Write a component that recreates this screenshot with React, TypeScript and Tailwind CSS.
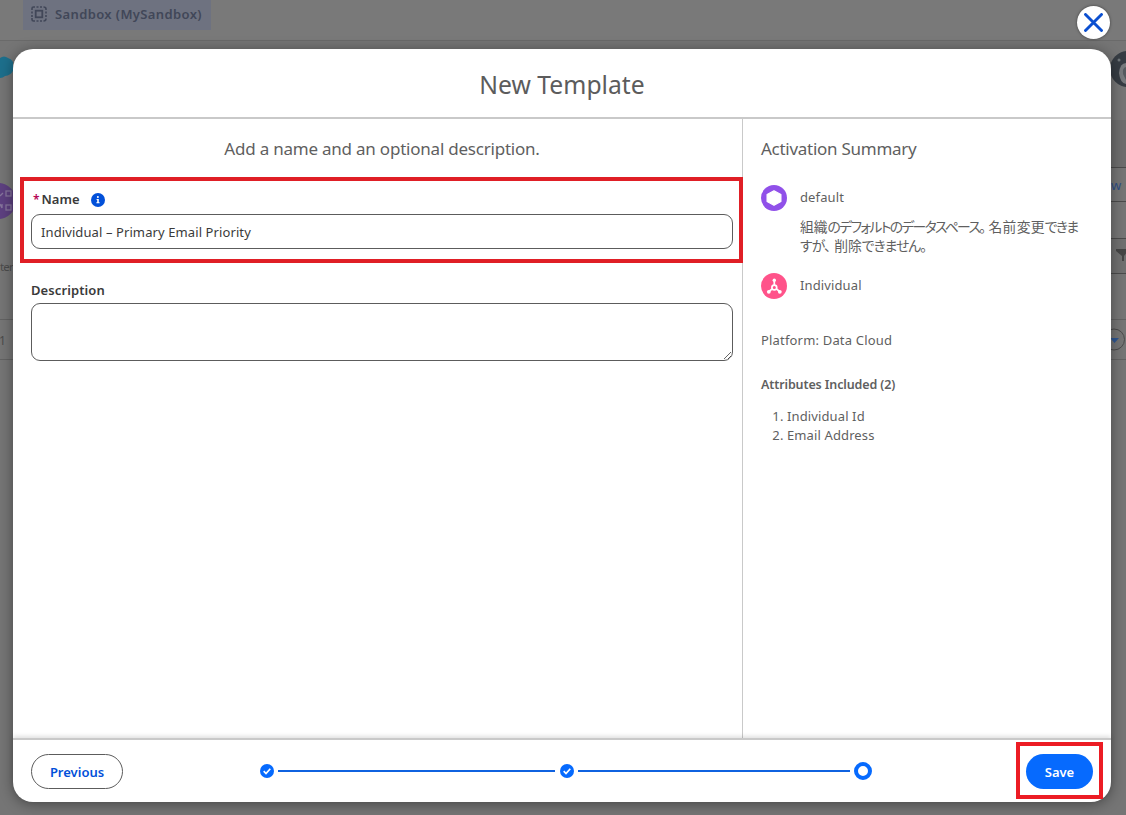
import type { ReactNode } from 'react';

interface SummaryItemProps {
  icon: ReactNode;
  title: string;
  children?: ReactNode;
}

function SandboxIcon() {
  return (
    <svg width="16" height="16" viewBox="0 0 16 16" fill="none" stroke="#414758" strokeWidth="1.6">
      <path d="M1 4V2.5Q1 1 2.5 1H4M5.5 1h2M9 1h2M12.5 1Q15 1 15 3v1M15 5.5v2M15 9v2M15 12.5Q15 15 12.5 15M11 15H9M7.5 15H5.5M4 15H2.5Q1 15 1 13.5V12M1 11V9M1 7.5V5.5" />
      <rect x="4.7" y="4.7" width="6.6" height="6.6" strokeWidth="1.8" />
    </svg>
  );
}

function CloseIcon() {
  return (
    <svg width="19" height="19" viewBox="0 0 19 19" stroke="#0b4fd0" strokeWidth="2.9" strokeLinecap="round">
      <path d="M1.5 1.5l16 16M17.5 1.5l-16 16" />
    </svg>
  );
}

function InfoIcon() {
  return (
    <svg width="14" height="14" viewBox="0 0 14 14">
      <circle cx="7" cy="7" r="7" fill="#0250d9" />
      <circle cx="6.9" cy="4" r="1" fill="#fff" />
      <path d="M5.6 5.9h2.2v3.3h.8v1.1H5.4V9.2h.8V7h-.6z" fill="#fff" />
    </svg>
  );
}

function DataSpaceIcon() {
  return (
    <svg width="26" height="26" viewBox="0 0 26 26">
      <circle cx="13" cy="13" r="13" fill="#9050e9" />
      <path
        d="M13 5.8l6.9 3.7v7L13 20.3l-6.9-3.8v-7z"
        fill="#fff"
        stroke="#fff"
        strokeWidth="1.2"
        strokeLinejoin="round"
      />
    </svg>
  );
}

function IndividualIcon() {
  return (
    <svg width="26" height="26" viewBox="0 0 26 26">
      <circle cx="13" cy="13" r="13" fill="#ff538a" />
      <g fill="none" stroke="#fff" strokeWidth="1.7">
        <circle cx="13.3" cy="14.5" r="2.4" />
        <path d="M13.3 12V7.5M11.2 15.8L8 18.5M15.4 15.8L18.6 18.5" />
      </g>
      <circle cx="13.3" cy="7.3" r="1.7" fill="#fff" />
      <circle cx="7.8" cy="18.8" r="1.9" fill="#fff" />
      <circle cx="18.8" cy="18.8" r="1.9" fill="#fff" />
    </svg>
  );
}

function StepDone() {
  return (
    <svg width="14" height="14" viewBox="0 0 14 14" className="shrink-0">
      <circle cx="7" cy="7" r="7" fill="#066afe" />
      <path d="M3.7 7.2l2.3 2.3 4.3-4.8" fill="none" stroke="#fff" strokeWidth="1.7" />
    </svg>
  );
}

function SummaryItem({ icon, title, children }: SummaryItemProps) {
  return (
    <div className="flex gap-[13px]">
      <span className="h-[26px] shrink-0">{icon}</span>
      <div className="min-w-0 flex-1">
        <p className="h-[26px] text-[13px] leading-6 tracking-[0.12px]">{title}</p>
        {children}
      </div>
    </div>
  );
}

// Page behind the dialog, only its edges stay visible
function PageBehind() {
  return (
    <div className="flex h-full flex-col bg-[#757575]">
      <div className="flex h-[41px] shrink-0 items-start border-b border-[#6a6a6a] bg-[#797979] pl-[23px]">
        <div className="flex h-[30px] w-[188px] items-center bg-[#6e7280] pb-[2px] pl-2 text-[13px] font-semibold text-[#414758]">
          <SandboxIcon />
          <span className="ml-2 whitespace-nowrap pt-[2px] tracking-[0.38px]">Sandbox (MySandbox)</span>
        </div>
      </div>
      <div className="flex flex-1 justify-between">
        <div className="flex w-[13px] flex-col overflow-hidden">
          <svg width="13" height="142" viewBox="0 0 13 142" className="shrink-0">
            <path d="M0 17Q4 14 8 17Q14 19 14 26Q13 34 5 35Q3 37 0 37z" fill="#1d6f8c" />
          </svg>
          <svg width="13" height="37" viewBox="0 0 13 37" className="shrink-0">
            <circle cx="-2" cy="18" r="18" fill="#5d4080" />
            <g fill="none" stroke="#86759c" strokeWidth="1.3">
              <rect x="6" y="8" width="5" height="5" />
              <rect x="6" y="22" width="5" height="5" />
              <path d="M0 13l3-3M0 21l2 4v-4" />
            </g>
          </svg>
          <div className="mt-[37px] h-[62px] shrink-0 text-[11.5px] leading-5 tracking-[-0.8px] text-[#4b4b4b]">ter</div>
          <div className="flex h-[41px] shrink-0 items-center border-y border-[#626262] pt-[2px] text-[12px] text-[#4b4b4b]">
            <span className="-ml-px">1</span>
          </div>
        </div>
        <div className="flex w-[15px] flex-col overflow-hidden">
          <svg width="15" height="79" viewBox="0 0 15 79" className="shrink-0">
            <circle cx="17" cy="28" r="18" fill="#363c43" />
            <path d="M15 22Q9 22 8 32Q9 42 15 43z" fill="#777a7d" />
            <path d="M15 26Q11 27 12 33L15 39z" fill="#565b60" />
            <circle cx="8" cy="19" r="1.5" fill="#6e7478" />
          </svg>
          <div className="h-[47px] shrink-0 bg-[#6d6d6d]" />
          <div className="flex h-[35px] shrink-0 items-center border-y border-[#4b4b4b] pt-[2px] text-[13px] text-[#2f4f86]">
            w
          </div>
          <div className="h-[36px] shrink-0" />
          <div className="flex h-[36px] shrink-0 items-center border-y border-[#4b4b4b] bg-[#707070] pl-[5px]">
            <svg width="10" height="14" viewBox="0 0 10 14" fill="#454545" className="shrink-0">
              <path d="M0 0h12v2L8 7v5H6V7L0 2z" />
            </svg>
          </div>
          <div className="h-[45px] shrink-0" />
          <div className="flex h-[41px] shrink-0 items-center border-y border-[#626262]">
            <svg width="15" height="24" viewBox="0 0 15 24" className="shrink-0">
              <circle cx="3" cy="11.5" r="10.5" fill="none" stroke="#4b4b4b" />
              <path d="M-1 10h9l-4.5 5z" fill="#2f5791" />
            </svg>
          </div>
        </div>
      </div>
    </div>
  );
}

function ActivationSummary() {
  return (
    <aside className="flex-1 border-l border-[#c9c9c9] pl-[18px] pr-5 pt-[17px] text-[13px] text-[#5f5f5f]">
      <h2 className="text-[17px] leading-[26px] tracking-[-0.27px]">Activation Summary</h2>
      <div className="mt-[23px] flex flex-col gap-[18px]">
        <SummaryItem icon={<DataSpaceIcon />} title="default">
          {/* kana are set tighter than the kanji around them */}
          <p className="mt-[6px] h-[38px] whitespace-nowrap text-[13.8px] leading-[19px]">
            組織
            <span className="tracking-[-1.65px] [font-feature-settings:'palt']">のデフォルトのデータスペース。</span>
            <span className="ml-1 tracking-[0.3px]">名前変更</span>
            <span className="tracking-[-1.65px] [font-feature-settings:'palt']">できま</span>
            <br />
            <span className="tracking-[-0.8px] [font-feature-settings:'palt']">すが、</span>
            <span className="ml-1">削除</span>
            <span className="tracking-[-1px] [font-feature-settings:'palt']">できません。</span>
          </p>
        </SummaryItem>
        <SummaryItem icon={<IndividualIcon />} title="Individual" />
      </div>
      <p className="mt-[31px] leading-5 tracking-[0.18px]">Platform: Data Cloud</p>
      <h3 className="mt-6 pt-px text-[12.5px] font-semibold leading-5 tracking-[-0.12px]">Attributes Included (2)</h3>
      <ol className="ml-[26px] mt-3 list-decimal leading-[19px] tracking-[0.12px]">
        <li>Individual Id</li>
        <li>Email Address</li>
      </ol>
    </aside>
  );
}

function TemplateForm() {
  return (
    <section className="w-[729px] shrink-0 text-[13px] text-[#3a3a3a]">
      <p className="pl-[9px] pt-[17px] text-center text-[17px] leading-[26px] tracking-[-0.22px] text-[#5f5f5f]">
        Add a name and an optional description.
      </p>
      <div className="relative -mr-px ml-[7px] mt-[15px] h-[86px] border-4 border-[#e01f26] px-[7px] pt-[9px]">
        <label className="flex h-5 items-center pl-[2px] font-semibold">
          <span className="mr-[2px] text-[12px] text-[#b60554]">*</span>
          Name
          <span className="ml-[11px]">
            <InfoIcon />
          </span>
        </label>
        <input
          className="mt-1 block h-[35px] w-[702px] rounded-[9px] border border-[#5c5c5c] pl-[9px] text-[13px] tracking-[0.1px] text-[#3a3a3a]"
          defaultValue="Individual – Primary Email Priority"
        />
      </div>
      <label className="ml-[18px] mt-[17px] block font-semibold leading-5 tracking-[0.1px]">Description</label>
      <textarea className="ml-[18px] mt-[3px] block h-[58px] w-[702px] rounded-[9px] border border-[#5c5c5c]" />
    </section>
  );
}

export default function App() {
  return (
    <div className="relative h-[815px] w-[1126px] overflow-hidden font-['Noto_Sans','Noto_Sans_CJK_JP',sans-serif]">
      <PageBehind />
      <button className="absolute left-[1077px] top-[6px] flex h-[33px] w-[33px] items-center justify-center rounded-full bg-white shadow-[0_0_3px_rgba(0,0,0,0.5)]">
        <CloseIcon />
      </button>
      <div className="absolute left-[13px] top-[49px] flex h-[753px] w-[1098px] flex-col rounded-[20px] bg-white shadow-[0_2px_14px_rgba(0,0,0,0.4)]">
        <header className="flex h-[70px] shrink-0 items-center justify-center border-b-2 border-[#c9c9c9] pb-[2px] pt-[5px]">
          <h1 className="text-[24.7px] leading-8 text-[#5c5c5c]">New Template</h1>
        </header>
        <div className="flex h-[619px] shrink-0">
          <TemplateForm />
          <ActivationSummary />
        </div>
        <footer className="flex h-[64px] shrink-0 items-start rounded-b-[20px] border-t-2 border-[#c9c9c9] pl-[18px] pr-2 shadow-[0_-2px_4px_rgba(0,0,0,0.12)]">
          <button className="mt-[14px] h-[35px] w-[92px] rounded-full border border-[#5c5c5c] pt-[2px] text-[13px] font-semibold text-[#0250d9]">
            Previous
          </button>
          <div className="ml-[137px] mt-[22px] flex h-[18px] w-[612px] items-center">
            <StepDone />
            <span className="ml-1 h-[2px] w-[277px] bg-[#0f62e0]" />
            <span className="ml-[5px] flex">
              <StepDone />
            </span>
            <span className="ml-1 h-[2px] w-[272px] bg-[#0f62e0]" />
            <span className="ml-1 h-[18px] w-[18px] rounded-full border-4 border-[#066afe]" />
          </div>
          <div className="ml-auto mt-[2px] h-[57px] w-[87px] border-4 border-[#ec1c24] px-[6px] pt-[8px]">
            <button className="h-[35px] w-[67px] rounded-full bg-[#066afe] pt-[2px] text-[13px] font-semibold text-white">
              Save
            </button>
          </div>
        </footer>
      </div>
    </div>
  );
}
